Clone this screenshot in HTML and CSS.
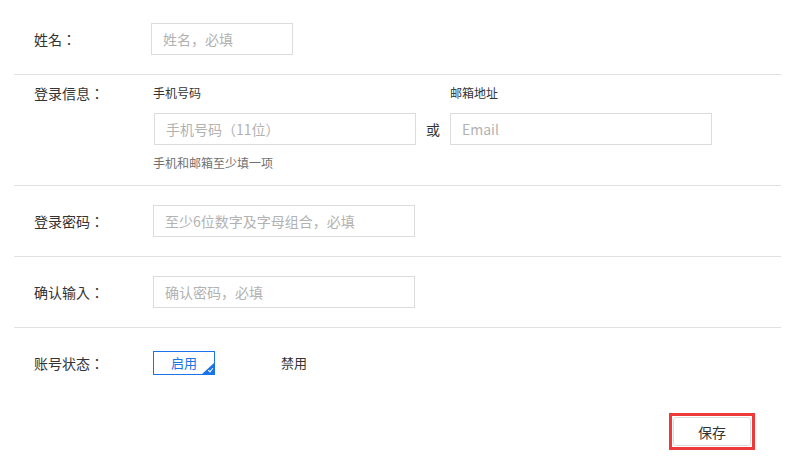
FILE: index.html
```html
<!DOCTYPE html>
<html lang="zh-CN">
<head>
  <meta charset="UTF-8" />
  <title>账号编辑</title>
  <link rel="stylesheet" href="styles.css">
</head>
<body>
  <div class="form">

    <!-- 姓名 -->
    <div class="ligne">
      <div class="label">姓名：</div>
      <input class="champ court" type="text" placeholder="姓名，必填" />
    </div>

    <!-- 登录信息 -->
    <div class="ligne ligne-login">
      <div class="label">登录信息：</div>
      <div class="login">
        <div class="login-col">
          <div class="sous-label">手机号码</div>
          <input class="champ" type="text" placeholder="手机号码（11位）" />
        </div>
        <div class="ou">或</div>
        <div class="login-col">
          <div class="sous-label">邮箱地址</div>
          <input class="champ" type="text" placeholder="Email" />
        </div>
        <div class="aide">手机和邮箱至少填一项</div>
      </div>
    </div>

    <!-- 密码 -->
    <div class="ligne">
      <div class="label">登录密码：</div>
      <input class="champ" type="password" placeholder="至少6位数字及字母组合，必填" />
    </div>

    <div class="ligne">
      <div class="label">确认输入：</div>
      <input class="champ" type="password" placeholder="确认密码，必填" />
    </div>

    <!-- 状态 -->
    <div class="ligne ligne-etat">
      <div class="label">账号状态：</div>
      <div class="options">
        <div class="option actif">启用</div>
        <div class="option">禁用</div>
      </div>
    </div>

    <div class="actions">
      <div class="cadre-rouge">
        <button class="bouton" type="button">保存</button>
      </div>
    </div>

  </div>
</body>
</html>
```

FILE: styles.css
```css
body {
  background: #fff;
  color: #333;
  font-family: "Noto Sans CJK SC", "Liberation Sans", sans-serif;
  font-size: 14px;
  margin: 0;
  padding: 0;
}

.form {
  width: 767px;
  margin-left: 14px;
  padding-top: 4px;
}

.ligne {
  display: flex;
  align-items: center;
  padding: 19px 0;
  border-bottom: 1px solid #e1e1e1;
}

/* colon centered like the original font */
.label {
  width: 119px;
  padding-left: 20px;
  line-height: 20px;
  flex-shrink: 0;
  font-family: "Noto Sans CJK JP", "Noto Sans CJK SC", sans-serif;
  font-feature-settings: "locl" 0;
  color: #333;
}

.champ {
  box-sizing: border-box;
  width: 262px;
  height: 32px;
  margin: 0;
  padding: 0 11px;
  border: 1px solid #dcdcdc;
  outline: none;
  font-family: inherit;
  font-size: 14px;
  color: #333;
}

.champ::placeholder {
  color: #b2b2b2;
}

.champ.court {
  width: 142px;
  margin-left: -2px;
}

/* bloc login */
.ligne-login {
  align-items: flex-start;
  padding: 9px 0 13px 0;
}

.ligne-login .label {
  line-height: 18px;
}

.login {
  display: flex;
  flex-wrap: wrap;
  align-items: flex-end;
  width: 600px;
}

.login-col {
  display: flex;
  flex-direction: column;
}

.sous-label {
  font-size: 12px;
  line-height: 18px;
  margin-bottom: 11px;
  color: #333;
}

.login-col .champ {
  margin-left: 1px;
}

.ou {
  width: 34px;
  text-align: center;
  line-height: 32px;
  color: #333;
}

.login-col + .ou + .login-col .champ {
  margin-left: 0;
}

.aide {
  width: 100%;
  font-size: 12px;
  line-height: 18px;
  margin-top: 9px;
  color: #707070;
}

/* etat */
.ligne-etat {
  padding: 23px 0;
  border-bottom: none;
}

.options {
  display: flex;
  gap: 48px;
}

.option {
  position: relative;
  box-sizing: border-box;
  width: 62px;
  height: 24px;
  line-height: 22px;
  text-align: center;
  border: 1px solid transparent;
  font-size: 13px;
  color: #333;
}

.option.actif {
  border-color: #1a73e8;
  color: #1a73e8;
}

.option.actif::after {
  content: "";
  position: absolute;
  right: 0;
  bottom: 0;
  width: 0;
  height: 0;
  border-left: 12px solid transparent;
  border-bottom: 11px solid #1a73e8;
}

.option.actif::before {
  content: "";
  position: absolute;
  right: 2px;
  bottom: 2px;
  width: 2px;
  height: 4px;
  border-right: 1px solid #fff;
  border-bottom: 1px solid #fff;
  transform: rotate(40deg);
  z-index: 1;
}

/* bouton */
.actions {
  display: flex;
  padding-left: 655px;
  margin-top: 15px;
}

.cadre-rouge {
  border: 3px solid #ee3a3a;
  padding: 1px;
}

.bouton {
  box-sizing: border-box;
  width: 78px;
  height: 29px;
  background: #fff;
  border: 1px solid #dcdcdc;
  border-radius: 3px;
  font-family: inherit;
  font-size: 14px;
  color: #333;
  padding: 0;
}
```
